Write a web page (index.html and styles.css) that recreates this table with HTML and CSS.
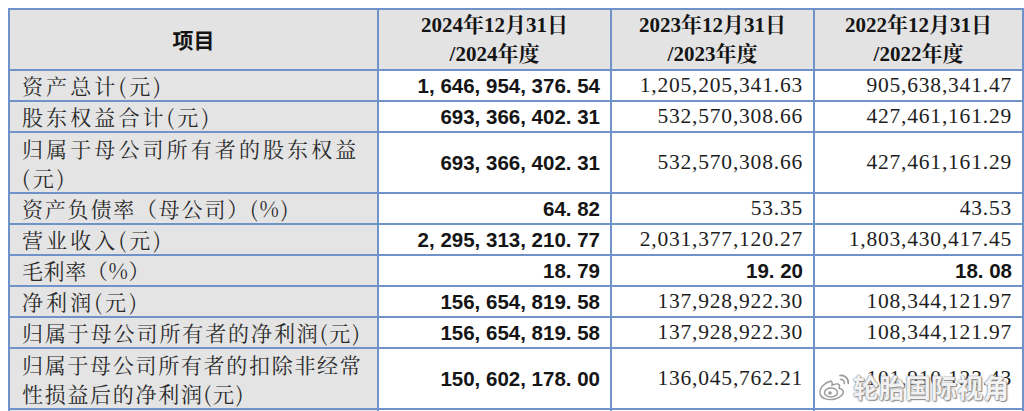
FILE: index.html
```html
<!DOCTYPE html>
<html lang="zh-CN">
<head>
<meta charset="utf-8">
<title>主要财务数据</title>
<link rel="stylesheet" href="styles.css">
</head>
<body>
<div class="sheet">
  <table class="fin">
    <colgroup>
      <col class="c1"><col class="c2"><col class="c3"><col class="c4">
    </colgroup>
    <thead>
      <tr class="hrow">
        <th class="hlabel">项目</th>
        <th>2024年12月31日<br>/2024年度</th>
        <th>2023年12月31日<br>/2023年度</th>
        <th>2022年12月31日<br>/2022年度</th>
      </tr>
    </thead>
    <tbody>
      <tr>
        <td class="label">资产总计(元)</td>
        <td class="bold">1, 646, 954, 376. 54</td>
        <td class="num">1,205,205,341.63</td>
        <td class="num">905,638,341.47</td>
      </tr>
      <tr>
        <td class="label">股东权益合计(元)</td>
        <td class="bold">693, 366, 402. 31</td>
        <td class="num">532,570,308.66</td>
        <td class="num">427,461,161.29</td>
      </tr>
      <tr class="tall">
        <td class="label">归属于母公司所有者的股东权益<br>(元)</td>
        <td class="bold">693, 366, 402. 31</td>
        <td class="num">532,570,308.66</td>
        <td class="num">427,461,161.29</td>
      </tr>
      <tr>
        <td class="label ratio">资产负债率（母公司）(%)</td>
        <td class="bold">64. 82</td>
        <td class="num">53.35</td>
        <td class="num">43.53</td>
      </tr>
      <tr>
        <td class="label">营业收入(元)</td>
        <td class="bold">2, 295, 313, 210. 77</td>
        <td class="num">2,031,377,120.27</td>
        <td class="num">1,803,430,417.45</td>
      </tr>
      <tr>
        <td class="label margin">毛利率（%）</td>
        <td class="bold">18. 79</td>
        <td class="bold">19. 20</td>
        <td class="bold">18. 08</td>
      </tr>
      <tr>
        <td class="label">净利润(元)</td>
        <td class="bold">156, 654, 819. 58</td>
        <td class="num">137,928,922.30</td>
        <td class="num">108,344,121.97</td>
      </tr>
      <tr>
        <td class="label mid">归属于母公司所有者的净利润(元)</td>
        <td class="bold">156, 654, 819. 58</td>
        <td class="num">137,928,922.30</td>
        <td class="num">108,344,121.97</td>
      </tr>
      <tr class="tall">
        <td class="label tight">归属于母公司所有者的扣除非经常<br>性损益后的净利润(元)</td>
        <td class="bold">150, 602, 178. 00</td>
        <td class="num">136,045,762.21</td>
        <td class="num">101,910,123.43</td>
      </tr>
      <tr>
        <td class="label"></td>
        <td class="bold"></td>
        <td class="num"></td>
        <td class="num"></td>
      </tr>
    </tbody>
  </table>
  <div class="mark">
    <svg class="weibo" viewBox="0 0 34 30" width="34" height="30" aria-hidden="true">
      <path d="M13 9c-6 1.5-12 7-11 12.5C3 27 11 28.5 17 27c6-1.5 9.5-5.5 8-8.5-.8-1.6-2.6-2-4-2.2 .8-2 .8-3.6-.6-4.2-1.6-.7-4.4.3-6.4 1.2 .4-1.6.4-3.4-1-4.3z" fill="rgba(255,255,255,0.85)" stroke="#9a9a9a" stroke-width="1.4"/>
      <ellipse cx="13" cy="20.5" rx="6.5" ry="4.5" fill="none" stroke="#9a9a9a" stroke-width="1.4"/>
      <circle cx="12" cy="21" r="1.8" fill="#9a9a9a"/>
      <path d="M22 3.5c4.5-.8 9 3 8.2 8" fill="none" stroke="#9a9a9a" stroke-width="1.6" stroke-linecap="round"/>
      <path d="M22.5 7.5c2.2-.3 4.3 1.6 3.8 4" fill="none" stroke="#9a9a9a" stroke-width="1.6" stroke-linecap="round"/>
    </svg>
    <span class="mtext">轮胎国际视角</span>
  </div>
</div>
</body>
</html>
```

FILE: styles.css
```css
html, body {
  margin: 0;
  padding: 0;
  overflow: hidden;
  background: #ffffff;
}

.sheet {
  position: relative;
  padding: 8px 0 0 8px;
  height: 403px;
  overflow: hidden;
}

.fin {
  border-collapse: collapse;
  table-layout: fixed;
  width: 1014px;
  color: #1c1c1c;
}

.c1 { width: 369px; }
.c2 { width: 233px; }
.c3 { width: 203px; }
.c4 { width: 209px; }

.fin th,
.fin td {
  border: 2px solid #6f93c8;
  padding: 0 11px;
  vertical-align: middle;
  white-space: nowrap;
  overflow: hidden;
}

.hrow {
  height: 61px;
}

.fin th {
  background: #e3e3e3;
  font-family: "Liberation Serif", "Noto Serif CJK SC", "Noto Sans CJK SC", serif;
  font-weight: 700;
  font-size: 21px;
  line-height: 29px;
  text-align: center;
  color: #141414;
}

.fin th.hlabel {
  font-family: "Noto Sans CJK SC", sans-serif;
  font-size: 21px;
}

.fin tbody tr {
  height: 31px;
}

.fin tbody tr.tall {
  height: 61px;
}

.fin td.label {
  background: #e4e4e4;
  font-family: "Noto Serif CJK SC", "Noto Sans CJK SC", serif;
  font-weight: 400;
  font-size: 21px;
  letter-spacing: 3.1px;
  line-height: 29px;
  color: #2a2a2a;
  text-align: left;
  padding-left: 12px;
  padding-right: 0;
}

.fin td.label.ratio {
  letter-spacing: 1.8px;
}

.fin td.label.margin {
  letter-spacing: 0.6px;
}

.fin td.label.mid {
  letter-spacing: 1.9px;
}

.fin td.label.tight {
  letter-spacing: 1.7px;
}

.fin td.bold {
  font-family: "Liberation Sans", "Noto Sans CJK SC", sans-serif;
  font-weight: 700;
  font-size: 20.5px;
  text-align: right;
  color: #151515;
  padding-right: 10px;
}

.fin td.num {
  font-family: "Liberation Serif", serif;
  font-weight: 400;
  font-size: 21.5px;
  letter-spacing: 0.8px;
  text-align: right;
  color: #1e1e1e;
  padding-right: 10px;
}

.mark {
  position: absolute;
  left: 818px;
  top: 368px;
  display: flex;
  align-items: center;
  gap: 1px;
}

.weibo {
  display: block;
}

.mtext {
  font-family: "Noto Sans CJK SC", sans-serif;
  font-size: 26px;
  font-weight: 700;
  color: rgba(255, 255, 255, 0.92);
  text-shadow: 0 0 1px #777, 0 0 2px #999, 1px 1px 1px #888;
  letter-spacing: 0;
}
```
